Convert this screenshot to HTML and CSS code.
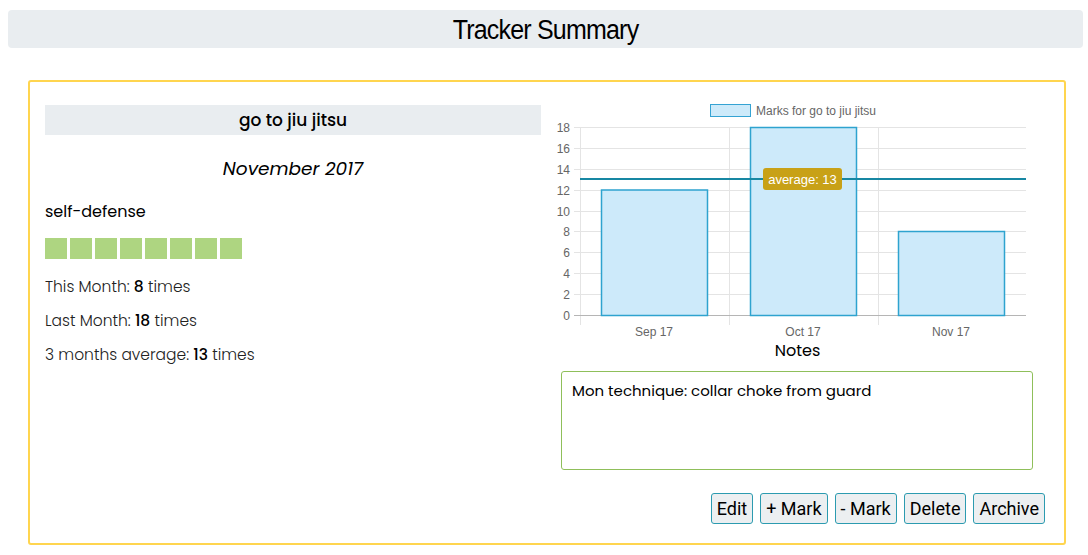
FILE: index.html
```html
<!DOCTYPE html>
<html>
<head>
<meta charset="utf-8">
<link rel="stylesheet" href="styles.css">
</head>
<body>
<header class="page-head"><h1>Tracker Summary</h1></header>
<section class="card">
  <div class="left">
    <h2 class="tracker-title">go to jiu jitsu</h2>
    <h3 class="month">November 2017</h3>
    <p class="category">self-defense</p>
    <div class="marks">
      <span></span><span></span><span></span><span></span><span></span><span></span><span></span><span></span>
    </div>
    <p class="stat">This Month: <b>8</b> times</p>
    <p class="stat">Last Month: <b>18</b> times</p>
    <p class="stat">3 months average: <b>13</b> times</p>
  </div>
  <div class="right">
    <svg class="chart" width="498" height="240" viewBox="0 0 498 240">
      <rect x="162.5" y="4.5" width="40" height="12" fill="#cdeafa" stroke="#35a3d3" stroke-width="1"/>
      <text x="208" y="15" class="legend">Marks for go to jiu jitsu</text>
      <g stroke="#e4e4e4" stroke-width="1">
        <line x1="26" y1="27.5" x2="478" y2="27.5"/>
        <line x1="26" y1="48.5" x2="478" y2="48.5"/>
        <line x1="26" y1="69.5" x2="478" y2="69.5"/>
        <line x1="26" y1="90.5" x2="478" y2="90.5"/>
        <line x1="26" y1="111.5" x2="478" y2="111.5"/>
        <line x1="26" y1="131.5" x2="478" y2="131.5"/>
        <line x1="26" y1="152.5" x2="478" y2="152.5"/>
        <line x1="26" y1="173.5" x2="478" y2="173.5"/>
        <line x1="26" y1="194.5" x2="478" y2="194.5"/>
        <line x1="32.5" y1="27" x2="32.5" y2="225"/>
        <line x1="181.5" y1="27" x2="181.5" y2="225"/>
        <line x1="330.5" y1="27" x2="330.5" y2="225"/>
      </g>
      <line x1="26" y1="215.5" x2="478" y2="215.5" stroke="#b5b5b5" stroke-width="1"/>
      <g class="ylab" text-anchor="end">
        <text x="22" y="31.5">18</text>
        <text x="22" y="52.5">16</text>
        <text x="22" y="73.5">14</text>
        <text x="22" y="94.5">12</text>
        <text x="22" y="115.5">10</text>
        <text x="22" y="135.5">8</text>
        <text x="22" y="156.5">6</text>
        <text x="22" y="177.5">4</text>
        <text x="22" y="198.5">2</text>
        <text x="22" y="219.5">0</text>
      </g>
      <g fill="#cdeafa" stroke="#2ea3cf" stroke-width="1.5">
        <rect x="53.5" y="90" width="106" height="125.5"/>
        <rect x="202.5" y="27.5" width="106" height="188"/>
        <rect x="350.5" y="131.5" width="106" height="84"/>
      </g>
      <line x1="32" y1="79" x2="478" y2="79" stroke="#1787a3" stroke-width="2"/>
      <rect x="215" y="68" width="79" height="22" rx="3" fill="#c8a117"/>
      <text x="254.5" y="83.5" class="avg" text-anchor="middle">average: 13</text>
      <g class="xlab" text-anchor="middle">
        <text x="106" y="236">Sep 17</text>
        <text x="255" y="236">Oct 17</text>
        <text x="403" y="236">Nov 17</text>
      </g>
    </svg>
    <h4 class="notes-title">Notes</h4>
    <div class="notes">Mon technique: collar choke from guard</div>
    <div class="actions">
      <button class="btn">Edit</button>
      <button class="btn">+ Mark</button>
      <button class="btn">- Mark</button>
      <button class="btn">Delete</button>
      <button class="btn">Archive</button>
    </div>
  </div>
</section>
</body>
</html>
```
FILE: styles.css
```css
* { box-sizing: border-box; }
body {
  margin: 0;
  padding: 10px 5px 0 8px;
  font-family: "Poppins", "Inter", "Open Sans", sans-serif;
  color: #111;
  background: #fff;
}
.page-head {
  height: 38px;
  background: #e9edf0;
  border-radius: 4px;
  display: flex;
  align-items: center;
  justify-content: center;
}
.page-head h1 {
  margin: 0;
  font-family: "Liberation Sans", Arial, sans-serif;
  font-weight: 400;
  font-size: 25px;
  letter-spacing: -0.8px;
  color: #000;
  transform: scaleY(1.08);
}
.card {
  margin: 32px 17px 0 20px;
  border: 2px solid #ffd54f;
  border-radius: 3px;
  height: 465px;
  padding: 18px 17px 0 15px;
  display: grid;
  grid-template-columns: 496px 1fr;
  column-gap: 7px;
}
.left { padding-top: 5px; }
.tracker-title {
  margin: 0;
  height: 30px;
  background: #e9edf0;
  text-align: center;
  font-size: 17px;
  font-weight: 500;
  line-height: 30px;
  color: #000;
}
.month {
  margin: 22px 0 0;
  text-align: center;
  font-size: 18.5px;
  font-style: italic;
  font-weight: 400;
  line-height: 24px;
  color: #000;
}
.category {
  margin: 19px 0 0;
  font-size: 16px;
  line-height: 24px;
  color: #000;
}
.marks {
  margin-top: 14px;
  display: flex;
  gap: 3px;
}
.marks span {
  width: 22px;
  height: 21px;
  background: #aed581;
}
.stat {
  margin: 16px 0 0;
  font-size: 15.5px;
  font-weight: 300;
  line-height: 24px;
  color: #222;
}
.stat + .stat { margin-top: 10px; }
.stat b { font-weight: 500; color: #000; }
.chart { display: block; }
.chart text { font-family: "Liberation Sans", Arial, sans-serif; font-size: 12px; fill: #666; }
.chart .avg { fill: #fff; font-weight: 400; font-size: 13px; }
.notes-title {
  margin: 0;
  text-align: center;
  font-size: 16px;
  font-weight: 400;
  line-height: 22px;
  color: #000;
}
.notes {
  margin: 9px 14px 0 13px;
  height: 99px;
  border: 1px solid #8fbf5a;
  border-radius: 3px;
  padding: 7px 10px;
  font-size: 15px;
  line-height: 24px;
  color: #000;
}
.actions {
  margin-top: 23px;
  display: flex;
  justify-content: flex-end;
  gap: 7px;
  padding-right: 2px;
}
.btn {
  height: 31px;
  padding: 0 5px;
  border: 1px solid #2c9bb0;
  border-radius: 3px;
  background: #eceff1;
  font-family: Roboto, "Liberation Sans", sans-serif;
  font-size: 18px;
  color: #000;
  line-height: 29px;
}
```
